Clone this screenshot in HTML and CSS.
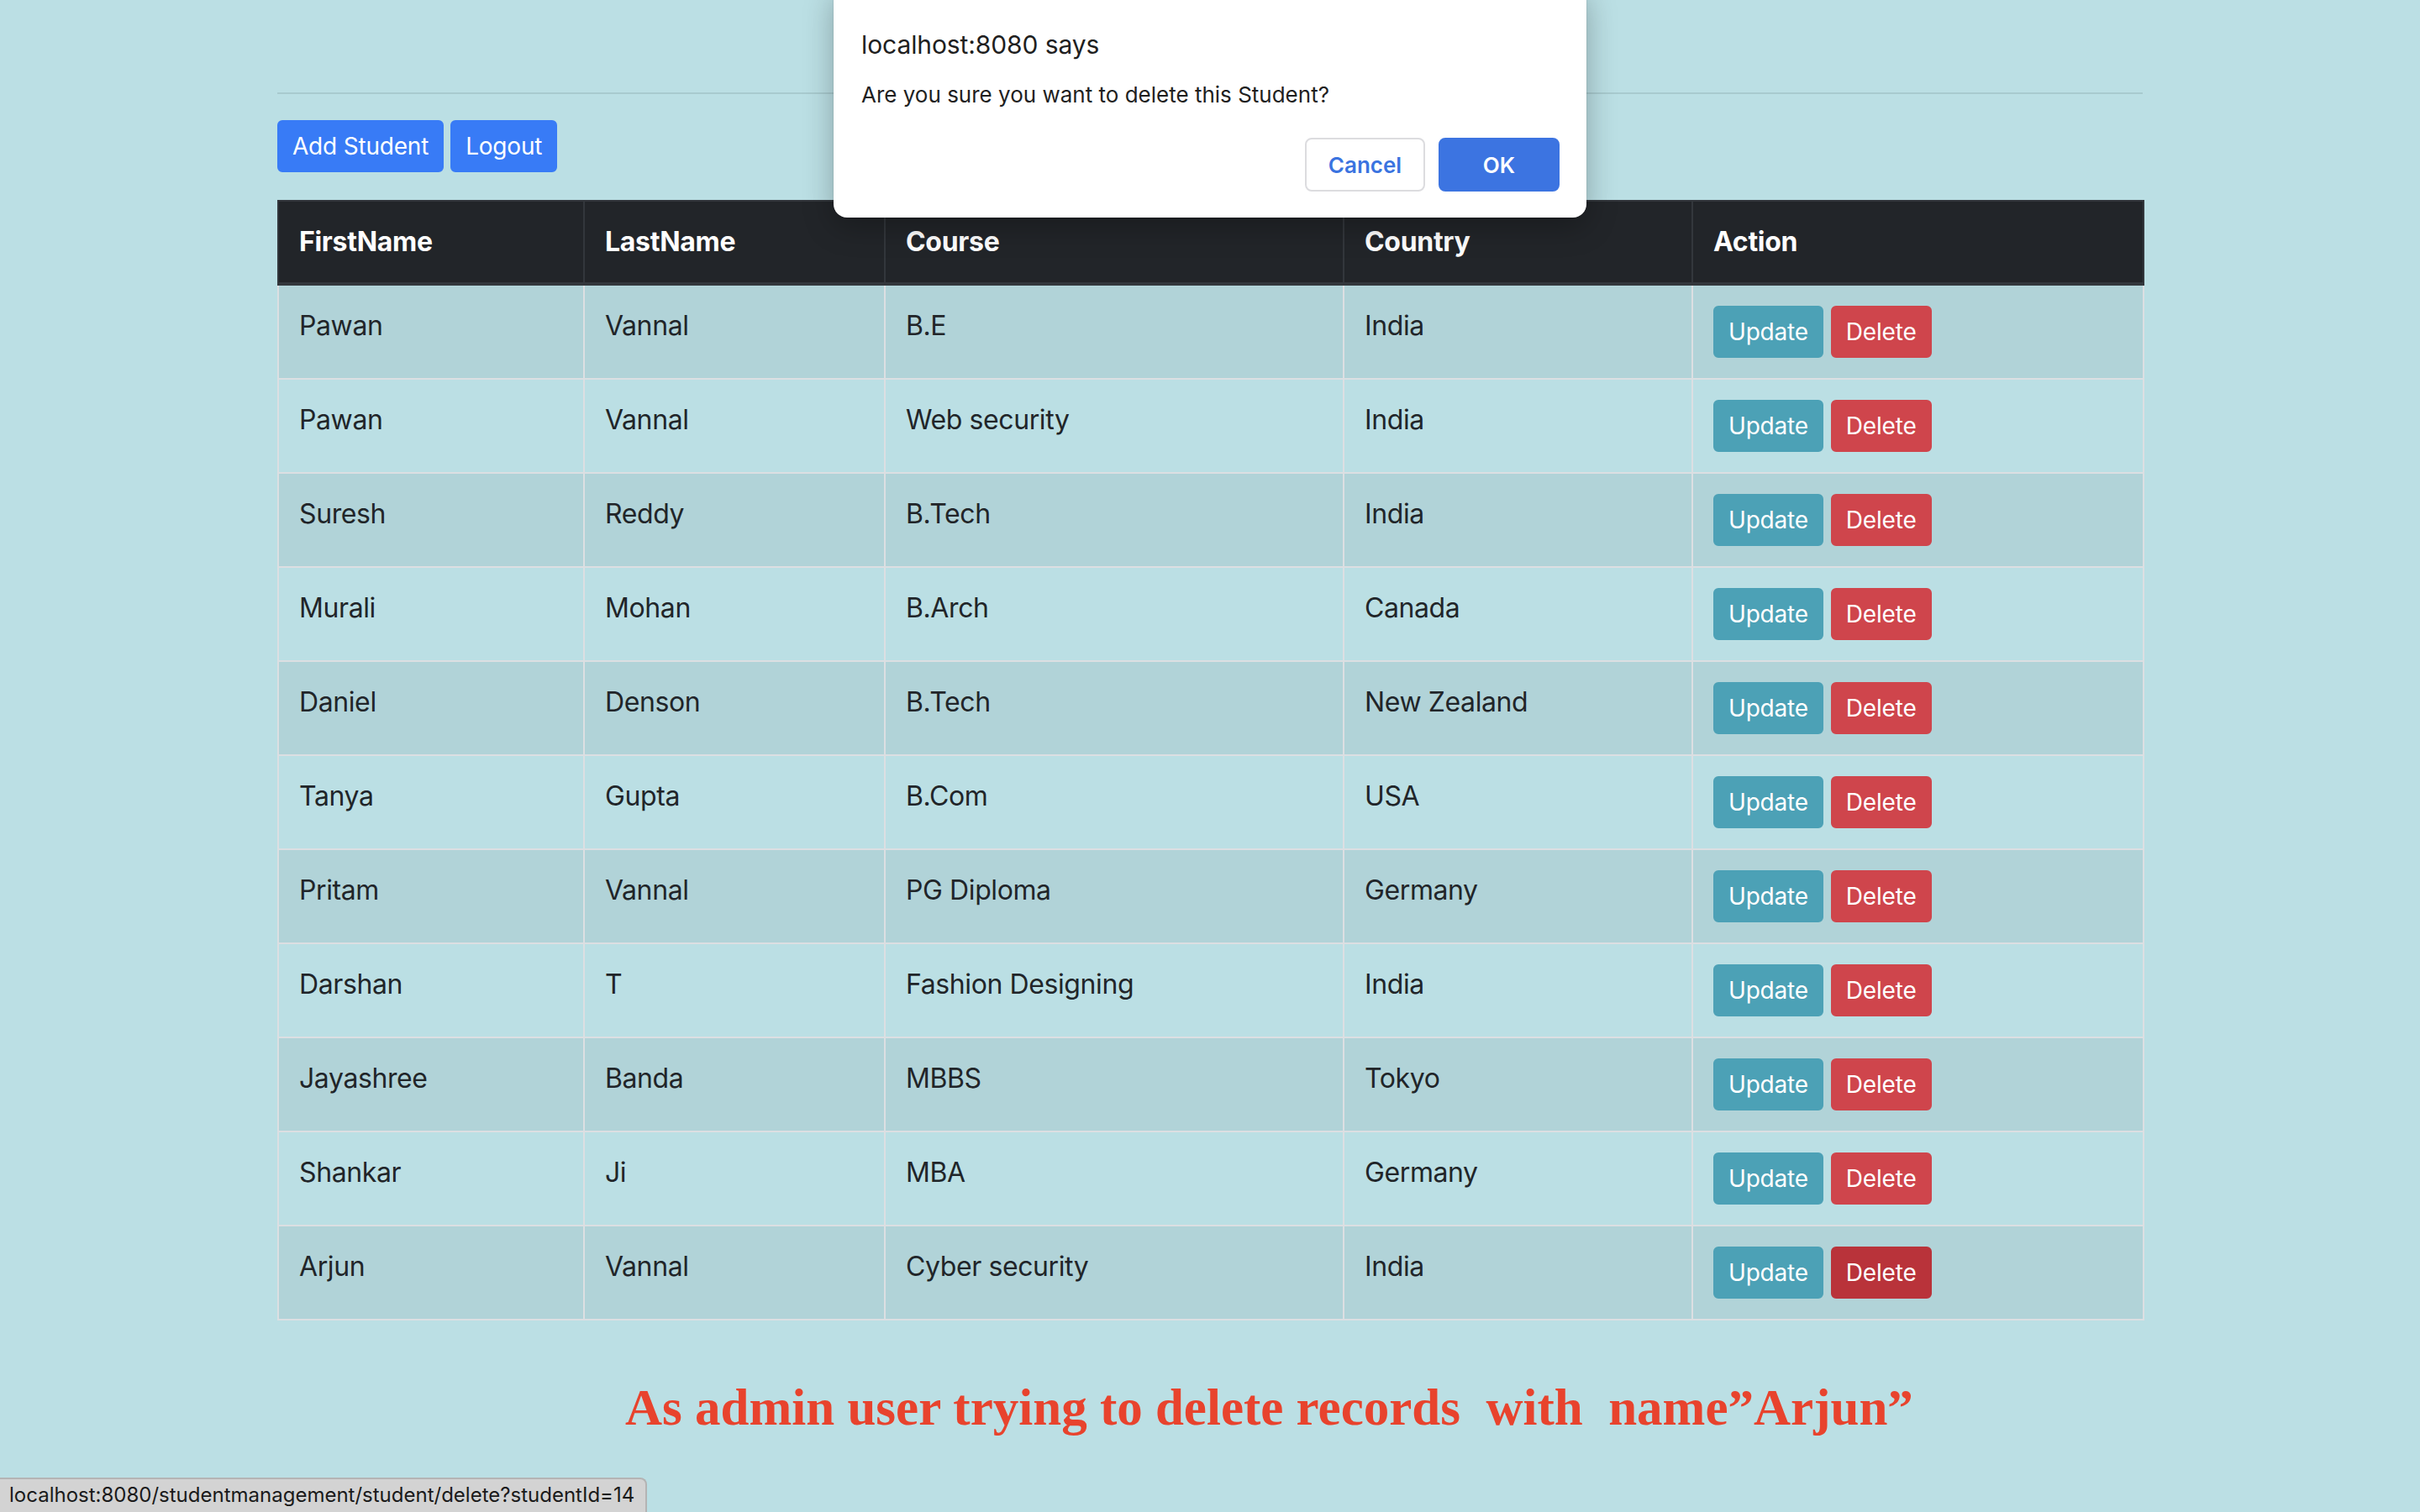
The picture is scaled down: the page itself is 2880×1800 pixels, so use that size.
FILE: index.html
```html
<!DOCTYPE html>
<html lang="en">
<head>
<meta charset="utf-8">
<title>Student Management</title>
<link rel="stylesheet" href="styles.css">
</head>
<body>
<div class="container">
  <hr class="rule">
  <div class="toolbar">
    <a class="btn btn-primary">Add Student</a>
    <a class="btn btn-primary">Logout</a>
  </div>
  <table class="table">
    <colgroup>
      <col class="c1"><col class="c2"><col class="c3"><col class="c4"><col class="c5">
    </colgroup>
    <thead>
      <tr><th>FirstName</th><th>LastName</th><th>Course</th><th>Country</th><th>Action</th></tr>
    </thead>
    <tbody>
      <tr><td>Pawan</td><td>Vannal</td><td>B.E</td><td>India</td><td><div class="actions"><a class="btn btn-info">Update</a><a class="btn btn-danger">Delete</a></div></td></tr>
      <tr><td>Pawan</td><td>Vannal</td><td>Web security</td><td>India</td><td><div class="actions"><a class="btn btn-info">Update</a><a class="btn btn-danger">Delete</a></div></td></tr>
      <tr><td>Suresh</td><td>Reddy</td><td>B.Tech</td><td>India</td><td><div class="actions"><a class="btn btn-info">Update</a><a class="btn btn-danger">Delete</a></div></td></tr>
      <tr><td>Murali</td><td>Mohan</td><td>B.Arch</td><td>Canada</td><td><div class="actions"><a class="btn btn-info">Update</a><a class="btn btn-danger">Delete</a></div></td></tr>
      <tr><td>Daniel</td><td>Denson</td><td>B.Tech</td><td>New Zealand</td><td><div class="actions"><a class="btn btn-info">Update</a><a class="btn btn-danger">Delete</a></div></td></tr>
      <tr><td>Tanya</td><td>Gupta</td><td>B.Com</td><td>USA</td><td><div class="actions"><a class="btn btn-info">Update</a><a class="btn btn-danger">Delete</a></div></td></tr>
      <tr><td>Pritam</td><td>Vannal</td><td>PG Diploma</td><td>Germany</td><td><div class="actions"><a class="btn btn-info">Update</a><a class="btn btn-danger">Delete</a></div></td></tr>
      <tr><td>Darshan</td><td>T</td><td>Fashion Designing</td><td>India</td><td><div class="actions"><a class="btn btn-info">Update</a><a class="btn btn-danger">Delete</a></div></td></tr>
      <tr><td>Jayashree</td><td>Banda</td><td>MBBS</td><td>Tokyo</td><td><div class="actions"><a class="btn btn-info">Update</a><a class="btn btn-danger">Delete</a></div></td></tr>
      <tr><td>Shankar</td><td>Ji</td><td>MBA</td><td>Germany</td><td><div class="actions"><a class="btn btn-info">Update</a><a class="btn btn-danger">Delete</a></div></td></tr>
      <tr><td>Arjun</td><td>Vannal</td><td>Cyber security</td><td>India</td><td><div class="actions"><a class="btn btn-info">Update</a><a class="btn btn-danger btn-hover">Delete</a></div></td></tr>
    </tbody>
  </table>
  <p class="caption">As admin user trying to delete records  with  name”Arjun”</p>
</div>

<div class="dialog">
  <div class="dialog-title">localhost:8080 says</div>
  <div class="dialog-msg">Are you sure you want to delete this Student?</div>
  <div class="dialog-actions">
    <button class="dbtn dbtn-cancel">Cancel</button>
    <button class="dbtn dbtn-ok">OK</button>
  </div>
</div>

<div class="statusbar">localhost:8080/studentmanagement/student/delete?studentId=14</div>
</body>
</html>
```

FILE: styles.css
```css
* { box-sizing: border-box; }

html, body {
  margin: 0;
  padding: 0;
}

body {
  width: 2880px;
  height: 1800px;
  overflow: hidden;
  background: #bbdfe4;
  font-family: Inter, "Noto Sans", "Liberation Sans", sans-serif;
  font-size: 32px;
  line-height: 48px;
  color: #212529;
}

.container {
  width: 2220px;
  margin: 0 auto;
  padding-top: 78px;
}

.rule {
  margin: 32px 0 31px;
  border: 0;
  border-top: 2px solid #a8cace;
  height: 0;
}

.toolbar {
  display: flex;
  gap: 8px;
  margin-bottom: 33px;
}

.actions {
  display: flex;
  gap: 9px;
}

.btn {
  display: inline-block;
  height: 62px;
  padding: 8px 16px;
  border: 2px solid transparent;
  border-radius: 6px;
  font-size: 28px;
  line-height: 42px;
  color: #fff;
  text-decoration: none;
  letter-spacing: -0.2px;
  white-space: nowrap;
}

.btn-primary { background: #387bf6; border-color: #387bf6; }
.btn-info { background: #4ca1b6; border-color: #4ca1b6; }
.btn-danger { background: #cf454c; border-color: #cf454c; }
.btn-danger.btn-hover { background: #b9333a; border-color: #b9333a; }

.table {
  width: 2220px;
  border-collapse: collapse;
  table-layout: fixed;
  border: 2px solid #dcdfe2;
}

.c1 { width: 364px; }
.c2 { width: 358px; }
.c3 { width: 546px; }
.c4 { width: 415px; }
.c5 { width: 537px; }

.table th {
  background: #222529;
  color: #fff;
  font-weight: 700;
  text-align: left;
  padding: 24px 24px;
  border: 2px solid #33373c;
  border-bottom-width: 4px;
  letter-spacing: -0.3px;
}

.table td {
  padding: 24px 24px;
  border: 2px solid #dcdfe2;
  vertical-align: top;
  height: 110px;
  letter-spacing: -0.4px;
}

.table tbody tr:nth-child(odd) td {
  background: rgba(0, 0, 0, 0.05);
}

.caption {
  margin: 68px 0 0 414px;
  font-family: "Liberation Serif", "Times New Roman", serif;
  font-weight: 700;
  font-size: 61px;
  line-height: 72px;
  color: #e8432d;
  white-space: pre;
}

.dialog {
  position: absolute;
  left: 992px;
  top: -16px;
  width: 896px;
  height: 275px;
  background: #fff;
  border-radius: 16px;
  box-shadow: 0 10px 36px rgba(0, 0, 0, 0.28), 0 0 0 1px rgba(0, 0, 0, 0.06);
  padding: 49px 32px 31px 33px;
  display: flex;
  flex-direction: column;
}

.dialog-title {
  font-size: 30px;
  line-height: 40px;
  color: #1f1f1f;
  letter-spacing: -0.1px;
}

.dialog-msg {
  margin-top: 22px;
  font-size: 26px;
  line-height: 36px;
  color: #1f1f1f;
}

.dialog-actions {
  margin-top: auto;
  display: flex;
  justify-content: flex-end;
  gap: 16px;
}

.dbtn {
  width: 143px;
  height: 64px;
  border-radius: 8px;
  font-family: Inter, "Noto Sans", "Liberation Sans", sans-serif;
  font-size: 26px;
  font-weight: 600;
  cursor: pointer;
}

.dbtn-cancel {
  background: #fff;
  color: #3a73e0;
  border: 2px solid #dcdcdf;
}

.dbtn-ok {
  width: 144px;
  background: #3c74e1;
  color: #fff;
  border: 2px solid #3c74e1;
}

.statusbar {
  position: fixed;
  left: 0;
  bottom: 0;
  width: 770px;
  height: 41px;
  background: #d3d3d3;
  border-top: 2px solid #b4b4b4;
  border-right: 2px solid #b4b4b4;
  border-top-right-radius: 8px;
  padding: 0 0 0 11px;
  font-family: Inter, "Liberation Sans", sans-serif;
  font-size: 24px;
  line-height: 38px;
  color: #1a1a1a;
  white-space: nowrap;
}
```
